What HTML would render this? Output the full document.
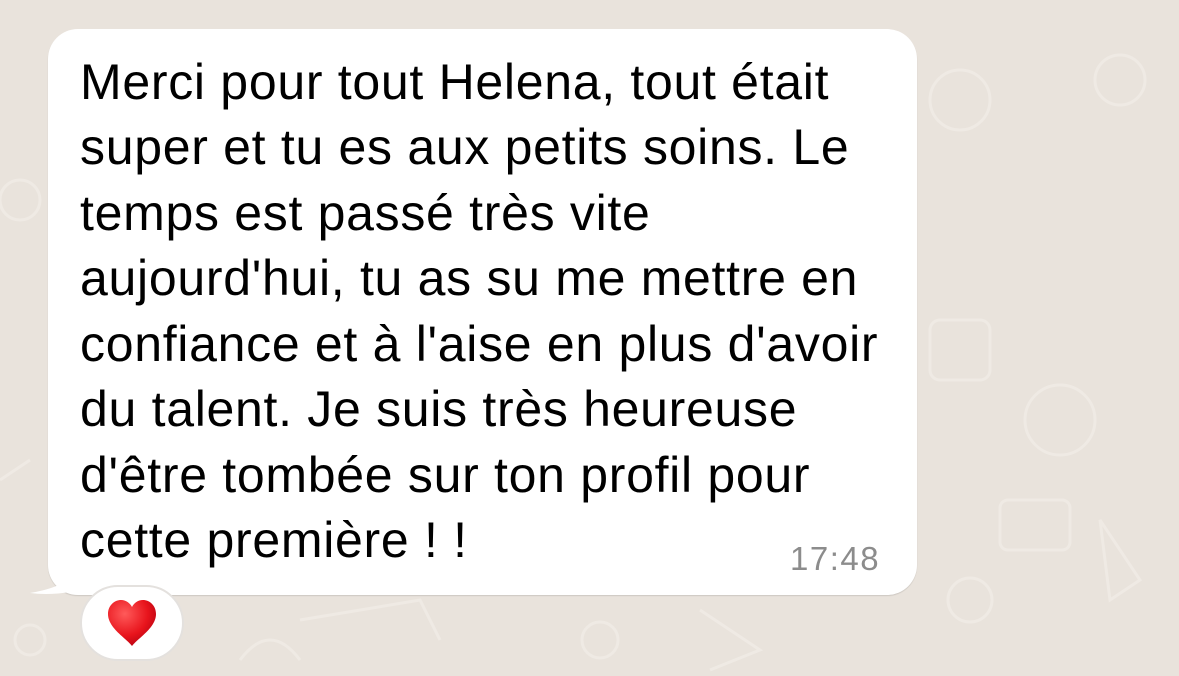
<!DOCTYPE html>
<html><head><meta charset="utf-8"><style>
html,body{margin:0;padding:0}
body{width:1179px;height:676px;background:#e9e3dc;position:relative;overflow:hidden;font-family:"Liberation Sans",sans-serif}
.bub{position:absolute;left:48px;top:29px;width:869px;height:566px;background:#fff;border-radius:30px;box-shadow:0 1px 1px rgba(0,0,0,0.12)}
.line{position:absolute;left:80px;font-size:50px;color:#000;white-space:nowrap;letter-spacing:0.7px;line-height:1}
.time{position:absolute;left:790px;top:540px;font-size:33px;color:#8c8c8c;letter-spacing:1.5px}
.heart{position:absolute;left:80px;top:585px;width:104px;height:76px;background:#fff;border:2px solid #e4e1de;border-radius:38px;box-sizing:border-box;text-align:center}
</style></head><body>
<svg style="position:absolute;left:0;top:0" width="1179" height="676">
<g fill="none" stroke="#efeae4" stroke-width="3">
<circle cx="960" cy="100" r="30"/><circle cx="1120" cy="80" r="25"/><rect x="930" y="320" width="60" height="60" rx="10"/>
<circle cx="1060" cy="420" r="35"/><rect x="1000" y="500" width="70" height="50" rx="8"/><circle cx="970" cy="600" r="22"/>
<path d="M1100 520 l40 60 l-30 20z"/><circle cx="20" cy="200" r="20"/><path d="M0 480 l30 -20"/>
<path d="M300 620 l120 -20 l20 40"/><circle cx="600" cy="640" r="18"/><path d="M700 610 l60 40 l-50 20"/>
<circle cx="30" cy="640" r="15"/><path d="M240 660 q30 -40 60 0"/>
</g>
</svg>
<div class="bub"></div>
<svg style="position:absolute;left:0;top:0" width="200" height="676"><path d="M50 550 L80 560 Q78 585 30 593 Q60 597 100 585 L100 550 Z" fill="#fff"/></svg>
<div class="line" style="top:57px">Merci pour tout Helena, tout était</div>
<div class="line" style="top:122px">super et tu es aux petits soins. Le</div>
<div class="line" style="top:188px">temps est passé très vite</div>
<div class="line" style="top:253px">aujourd'hui, tu as su me mettre en</div>
<div class="line" style="top:319px">confiance et à l'aise en plus d'avoir</div>
<div class="line" style="top:384px">du talent. Je suis très heureuse</div>
<div class="line" style="top:450px">d'être tombée sur ton profil pour</div>
<div class="line" style="top:515px">cette première ! !</div>
<div class="time">17:48</div>
<div class="heart"><svg width="52" height="52" viewBox="0 0 52 52" style="margin-top:11px"><defs><radialGradient id="g" cx="0.35" cy="0.3" r="0.8"><stop offset="0" stop-color="#ff5a5a"/><stop offset="0.6" stop-color="#e8141c"/><stop offset="1" stop-color="#b00010"/></radialGradient></defs><path d="M26 48 C20 40 2 30 2 16 C2 7 9 2 15 2 C20 2 24 5 26 9 C28 5 32 2 37 2 C43 2 50 7 50 16 C50 30 32 40 26 48 Z" fill="url(#g)"/></svg></div>
</body></html>
